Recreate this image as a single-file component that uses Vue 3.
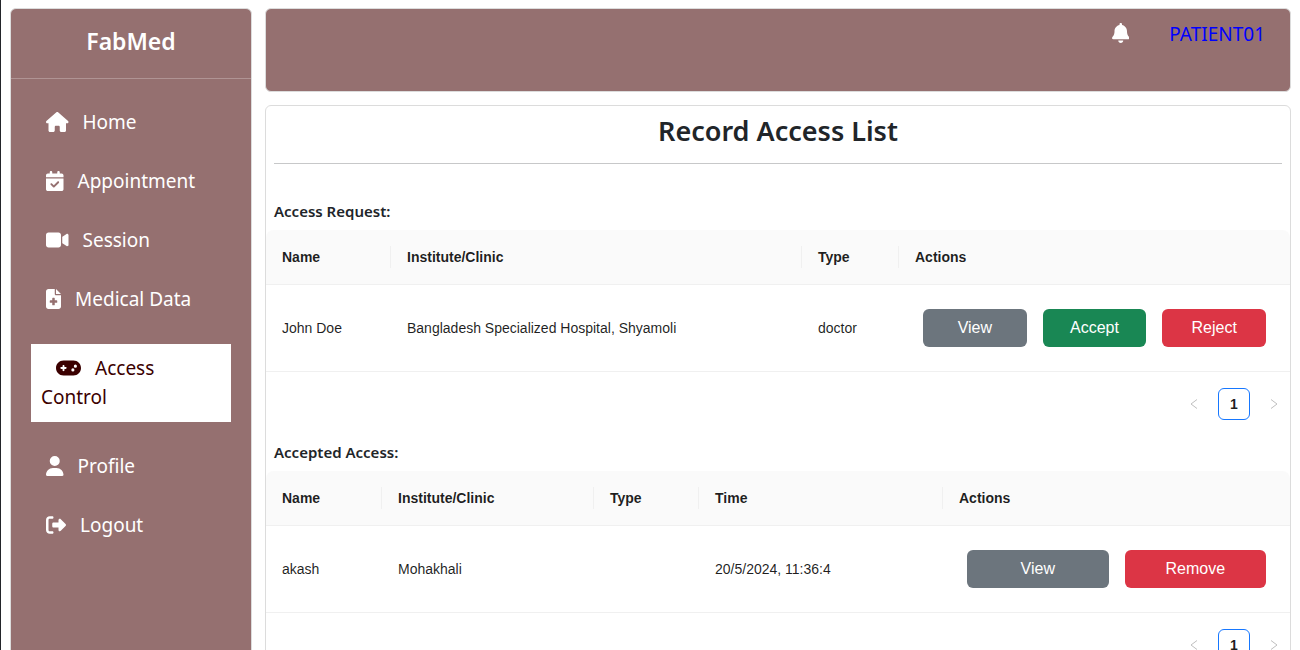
<script setup>
const icons = {
  house: { w: 576, d: 'M575.8 255.5c0 18-15 32.1-32 32.1l-32 0 .7 160.2c0 2.7-.2 5.4-.5 8.1l0 16.2c0 22.1-17.9 40-40 40l-16 0c-1.1 0-2.2 0-3.3-.1c-1.4 .1-2.8 .1-4.2 .1L416 512l-24 0c-22.1 0-40-17.9-40-40l0-24 0-64c0-17.7-14.3-32-32-32l-64 0c-17.7 0-32 14.3-32 32l0 64 0 24c0 22.1-17.9 40-40 40l-24 0-31.9 0c-1.5 0-3-.1-4.5-.2c-1.2 .1-2.4 .2-3.6 .2l-16 0c-22.1 0-40-17.9-40-40l0-112c0-.9 0-1.9 .1-2.8l0-69.7-32 0c-18 0-32-14-32-32.1c0-9 3-17 10-24L266.4 8c7-7 15-8 22-8s15 2 21 7L564.8 231.5c8 7 12 15 11 24z' },
  calendar: { w: 448, d: 'M128 0c17.7 0 32 14.3 32 32V64H288V32c0-17.7 14.3-32 32-32s32 14.3 32 32V64h48c26.5 0 48 21.5 48 48v48H0V112C0 85.5 21.5 64 48 64H96V32c0-17.7 14.3-32 32-32zM0 192H448V464c0 26.5-21.5 48-48 48H48c-26.5 0-48-21.5-48-48V192zM329 305c9.4-9.4 9.4-24.6 0-33.9s-24.6-9.4-33.9 0l-95 95-47-47c-9.4-9.4-24.6-9.4-33.9 0s-9.4 24.6 0 33.9l64 64c9.4 9.4 24.6 9.4 33.9 0L329 305z' },
  video: { w: 576, d: 'M0 128C0 92.7 28.7 64 64 64H320c35.3 0 64 28.7 64 64V384c0 35.3-28.7 64-64 64H64c-35.3 0-64-28.7-64-64V128zM559.1 99.8c10.4 5.6 16.9 16.4 16.9 28.2V384c0 11.8-6.5 22.6-16.9 28.2s-23 5-32.9-1.6l-96-64L416 337.1V320 192 174.9l14.2-9.5 96-64c9.8-6.5 22.4-7.2 32.9-1.6z' },
  file: { w: 384, d: 'M64 0C28.7 0 0 28.7 0 64V448c0 35.3 28.7 64 64 64H320c35.3 0 64-28.7 64-64V160H256c-17.7 0-32-14.3-32-32V0H64zM256 0V128H384L256 0zM160 240c0-8.8 7.2-16 16-16h32c8.8 0 16 7.2 16 16v48h48c8.8 0 16 7.2 16 16v32c0 8.8-7.2 16-16 16H224v48c0 8.8-7.2 16-16 16H176c-8.8 0-16-7.2-16-16V352H112c-8.8 0-16-7.2-16-16V304c0-8.8 7.2-16 16-16h48V240z' },
  gamepad: { w: 640, d: 'M192 64C86 64 0 150 0 256S86 448 192 448H448c106 0 192-86 192-192s-86-192-192-192H192zM496 168a40 40 0 1 1 0 80 40 40 0 1 1 0-80zM392 304a40 40 0 1 1 80 0 40 40 0 1 1 -80 0zM168 200c0-13.3 10.7-24 24-24s24 10.7 24 24v32h32c13.3 0 24 10.7 24 24s-10.7 24-24 24H216v32c0 13.3-10.7 24-24 24s-24-10.7-24-24V280H136c-13.3 0-24-10.7-24-24s10.7-24 24-24h32V200z' },
  user: { w: 448, d: 'M224 256A128 128 0 1 0 224 0a128 128 0 1 0 0 256zm-45.7 48C79.8 304 0 383.8 0 482.3C0 498.7 13.3 512 29.7 512H418.3c16.4 0 29.7-13.3 29.7-29.7C448 383.8 368.2 304 269.7 304H178.3z' },
  logout: { w: 512, d: 'M377.9 105.9L500.7 228.7c7.2 7.2 11.3 17.1 11.3 27.3s-4.1 20.1-11.3 27.3L377.9 406.1c-6.4 6.4-15 9.9-24 9.9c-18.7 0-33.9-15.2-33.9-33.9l0-62.1-128 0c-17.7 0-32-14.3-32-32l0-64c0-17.7 14.3-32 32-32l128 0 0-62.1c0-18.7 15.2-33.9 33.9-33.9c9 0 17.6 3.6 24 9.9zM160 96L96 96c-17.7 0-32 14.3-32 32l0 256c0 17.7 14.3 32 32 32l64 0c17.7 0 32 14.3 32 32s-14.3 32-32 32l-64 0c-53 0-96-43-96-96L0 128C0 75 43 32 96 32l64 0c17.7 0 32 14.3 32 32s-14.3 32-32 32z' },
  bell: { w: 448, d: 'M224 0c-17.7 0-32 14.3-32 32V51.2C119 66 64 130.6 64 208v18.8c0 47-17.3 92.4-48.5 127.6l-7.4 8.3c-8.4 9.4-10.4 22.9-5.3 34.4S19.4 416 32 416H416c12.6 0 24-7.4 29.2-18.9s3.1-25-5.3-34.4l-7.4-8.3C401.3 319.2 384 273.9 384 226.8V208c0-77.4-55-142-128-156.8V32c0-17.7-14.3-32-32-32zm45.3 493.3c12-12 18.7-28.3 18.7-45.3H224 160c0 17 6.7 33.3 18.7 45.3s28.3 18.7 45.3 18.7s33.3-6.7 45.3-18.7z' },
}

const menu = [
  { label: 'Home', icon: 'house' },
  { label: 'Appointment', icon: 'calendar' },
  { label: 'Session', icon: 'video' },
  { label: 'Medical Data', icon: 'file' },
  { label: 'Access Control', icon: 'gamepad', active: true },
  { label: 'Profile', icon: 'user' },
  { label: 'Logout', icon: 'logout' },
]

const sections = [
  {
    id: 'request',
    title: 'Access Request:',
    columns: ['Name', 'Institute/Clinic', 'Type', 'Actions'],
    rows: [['John Doe', 'Bangladesh Specialized Hospital, Shyamoli', 'doctor']],
    actions: [
      { label: 'View', kind: 'secondary' },
      { label: 'Accept', kind: 'success' },
      { label: 'Reject', kind: 'danger' },
    ],
  },
  {
    id: 'accepted',
    title: 'Accepted Access:',
    columns: ['Name', 'Institute/Clinic', 'Type', 'Time', 'Actions'],
    rows: [['akash', 'Mohakhali', '', '20/5/2024, 11:36:4']],
    actions: [
      { label: 'View', kind: 'secondary' },
      { label: 'Remove', kind: 'danger' },
    ],
  },
]
</script>

<template>
  <div class="page">
    <aside class="sidebar">
      <h2 class="brand">FabMed</h2>
      <nav class="menu">
        <a
          v-for="item in menu"
          :key="item.label"
          href="#"
          class="menu-item"
          :class="{ active: item.active }"
        >
          <svg class="icon" :viewBox="`0 0 ${icons[item.icon].w} 512`" aria-hidden="true">
            <path :d="icons[item.icon].d" />
          </svg>{{ item.label }}
        </a>
      </nav>
    </aside>

    <div class="content">
      <header class="topbar">
        <button type="button" class="bell" aria-label="Notifications">
          <svg class="icon" :viewBox="`0 0 ${icons.bell.w} 512`" aria-hidden="true">
            <path :d="icons.bell.d" />
          </svg>
        </button>
        <a href="#" class="user">PATIENT01</a>
      </header>

      <main class="panel">
        <h1 class="title">Record Access List</h1>

        <section v-for="s in sections" :key="s.id" class="section" :aria-labelledby="s.id">
          <h2 :id="s.id" class="section-title">{{ s.title }}</h2>
          <table class="table" :class="s.id" :aria-labelledby="s.id">
            <thead>
              <tr>
                <th v-for="c in s.columns" :key="c" scope="col" :class="c.slice(0, 4).toLowerCase()">{{ c }}</th>
              </tr>
            </thead>
            <tbody>
              <tr v-for="(row, i) in s.rows" :key="i">
                <td v-for="(cell, j) in row" :key="j">{{ cell }}</td>
                <td>
                  <div class="actions">
                    <button
                      v-for="a in s.actions"
                      :key="a.label"
                      type="button"
                      class="btn"
                      :class="a.kind"
                    >{{ a.label }}</button>
                  </div>
                </td>
              </tr>
            </tbody>
          </table>
          <div class="pagination">
            <button type="button" class="page-btn" disabled aria-label="Previous page">
              <svg class="chevron" viewBox="0 0 12 12" aria-hidden="true"><path d="M9 1.5 3 6l6 4.5" /></svg>
            </button>
            <button type="button" class="page-btn current" aria-current="page">1</button>
            <button type="button" class="page-btn" disabled aria-label="Next page">
              <svg class="chevron" viewBox="0 0 12 12" aria-hidden="true"><path d="M3 1.5 9 6l-6 4.5" /></svg>
            </button>
          </div>
        </section>
      </main>
    </div>
  </div>
</template>

<style>
body {
  margin: 0;
  background: #fff;
}
</style>

<style scoped>
.page,
.page * {
  box-sizing: border-box;
}

.page {
  display: grid;
  grid-template-columns: 242px minmax(0, 1fr);
  gap: 13px;
  min-height: 100vh;
  padding: 8px 9px;
  border-left: 1px solid #23252a;
  color: #212529;
  font-family: "Noto Sans", sans-serif;
  font-size: 19px;
  line-height: 29px;
}

.sidebar,
.topbar,
.panel {
  border: 1px solid #dcdcdc;
  border-radius: 6px;
}

.sidebar,
.topbar {
  background: #957070;
}

.brand {
  margin: 0;
  padding: 18px 0 22px;
  border-bottom: 1px solid #b09494;
  color: #fff;
  font-size: 23px;
  font-weight: 600;
  line-height: 29px;
  text-align: center;
}

.menu {
  display: flex;
  flex-direction: column;
  gap: 30px;
  padding: 29px 20px;
}

.menu-item {
  color: #fff;
  text-decoration: none;
}

.menu-item.active {
  padding: 10px;
  background: #fff;
  color: #3b0000;
}

.icon {
  height: 20px;
  fill: currentColor;
}

.menu-item .icon {
  margin: 0 14px 0 15px;
  vertical-align: -3px;
}

.content {
  display: flex;
  flex-direction: column;
  gap: 13px;
}

.topbar {
  display: flex;
  justify-content: flex-end;
  align-items: flex-start;
  gap: 40px;
  min-height: 84px;
  padding: 11px 25px;
}

.bell {
  display: flex;
  padding: 3px 0;
  border: 0;
  background: none;
  color: #fff;
}

.user {
  color: #0000ff;
  text-decoration: none;
}

.panel {
  flex: 1;
}

.title {
  margin: 0 8px 32px;
  padding: 8px 0 15px;
  border-bottom: 1px solid #c7c8c9;
  font-size: 27px;
  font-weight: 600;
  line-height: 34px;
  text-align: center;
}

.section-title {
  margin: 0;
  padding: 6px 8px 9px;
  font-size: 15px;
  font-weight: 600;
  line-height: 19px;
}

.table {
  width: 100%;
  border-collapse: separate;
  border-spacing: 0;
  table-layout: fixed;
  color: rgba(0, 0, 0, 0.88);
  font-family: "Liberation Sans", Arial, sans-serif;
  font-size: 14px;
  line-height: 22px;
  text-align: left;
}

.table th,
.table td {
  padding: 16px;
  border-bottom: 1px solid #f0f0f0;
}

.table th {
  position: relative;
  background: #fafafa;
  font-weight: 700;
}

.table th:first-child {
  border-top-left-radius: 8px;
}

.table th:last-child {
  border-top-right-radius: 8px;
}

.table th:not(:last-child)::after {
  content: "";
  position: absolute;
  top: 16px;
  right: 0;
  width: 1px;
  height: 22px;
  background: #f0f0f0;
}

.request .name { width: 125px; }
.request .type { width: 97px; }
.request .acti { width: 391px; }
.accepted .name { width: 116px; }
.accepted .type { width: 105px; }
.accepted .time { width: 244px; }
.accepted .acti { width: 347px; }

.actions {
  display: flex;
  gap: 16px;
  padding: 8px;
}

.btn {
  flex: 1 1 0;
  height: 38px;
  padding: 0 12px;
  border: 0;
  border-radius: 6px;
  color: #fff;
  font-family: inherit;
  font-size: 16px;
  line-height: 24px;
}

.secondary { background: #6c757d; }
.success { background: #198754; }
.danger { background: #dc3545; }

.pagination {
  display: flex;
  justify-content: flex-end;
  gap: 8px;
  padding: 16px 0 17px;
}

.page-btn {
  display: flex;
  justify-content: center;
  align-items: center;
  width: 32px;
  height: 32px;
  padding: 0;
  border: 0;
  border-radius: 6px;
  background: #fff;
  color: #bfbfbf;
}

.page-btn.current {
  border: 1px solid #1677ff;
  color: rgba(0, 0, 0, 0.88);
  font-family: "Liberation Sans", Arial, sans-serif;
  font-size: 14px;
  font-weight: 700;
}

.chevron {
  width: 12px;
  height: 12px;
  fill: none;
  stroke: currentColor;
}
</style>
